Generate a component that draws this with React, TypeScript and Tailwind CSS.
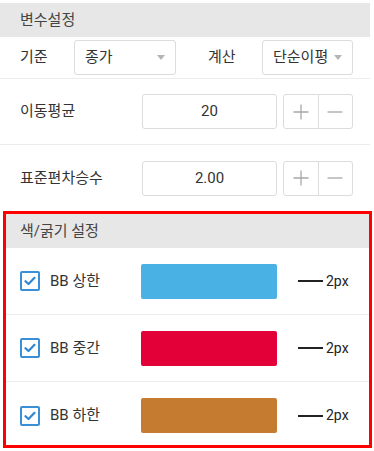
import React from "react";

const font = { fontFamily: "Roboto, 'Noto Sans CJK KR', 'Noto Sans', sans-serif" };

function Arrow() {
  return (
    <svg width="8" height="5" viewBox="0 0 8 5" className="shrink-0">
      <path d="M0 0 L8 0 L4 5 Z" fill="#b5b5b5" />
    </svg>
  );
}

function Select({ value, width }: { value: string; width: string }) {
  return (
    <div className={`${width} h-[35px] border border-[#dcdcdc] rounded-[3px] flex items-center justify-between pl-[10px] pr-[10px] text-[15px] text-[#333]`}>
      <span>{value}</span>
      <Arrow />
    </div>
  );
}

function Stepper() {
  return (
    <div className="w-[70px] h-[35px] border border-[#dcdcdc] rounded-[3px] flex">
      <div className="flex-1 flex items-center justify-center border-r border-[#dcdcdc]">
        <svg width="16" height="16" viewBox="0 0 16 16">
          <path d="M8 0.5 V15.5 M0.5 8 H15.5" stroke="#a8a8a8" strokeWidth="1.3" />
        </svg>
      </div>
      <div className="flex-1 flex items-center justify-center">
        <svg width="16" height="16" viewBox="0 0 16 16">
          <path d="M0.5 8 H15.5" stroke="#a8a8a8" strokeWidth="1.3" />
        </svg>
      </div>
    </div>
  );
}

function NumRow({ label, value, divider }: { label: string; value: string; divider?: boolean }) {
  return (
    <div className={`h-[66px] flex items-center pl-[20px] ${divider ? "border-b border-[#ececec]" : ""}`}>
      <div className="w-[122px] text-[15px] text-[#333]">{label}</div>
      <div className="w-[135px] h-[35px] border border-[#dcdcdc] rounded-[3px] flex items-center justify-center text-[15px] text-[#333]">
        {value}
      </div>
      <div className="ml-[6px]">
        <Stepper />
      </div>
    </div>
  );
}

function Check() {
  return (
    <div className="w-[20px] h-[20px] border-2 border-[#3a8fd6] rounded-[2px] flex items-center justify-center">
      <svg width="12" height="10" viewBox="0 0 12 10">
        <path d="M1.5 5.2 L4.5 8 L10.5 1.8" stroke="#2f86d2" strokeWidth="2.2" fill="none" strokeLinecap="round" strokeLinejoin="round" />
      </svg>
    </div>
  );
}

function ColorRow({ label, color, divider }: { label: string; color: string; divider?: boolean }) {
  return (
    <div className={`h-[67px] flex items-center pl-[14px] ${divider ? "border-b border-[#ececec]" : ""}`}>
      <Check />
      <div className="ml-[10px] w-[91px] text-[15px] text-[#333]">{label}</div>
      <div className="w-[136px] h-[35px] rounded-[2px]" style={{ backgroundColor: color }} />
      <div className="ml-[21px] w-[25px] h-[2px] bg-[#222]" />
      <div className="ml-[3px] text-[14px] text-[#222]">2px</div>
    </div>
  );
}

export default function App() {
  return (
    <div className="w-[374px] h-[451px] bg-white overflow-hidden" style={font}>
      <div className="w-[370px] pt-[3px]">
        <div className="h-[34px] bg-[#e7e7e7] flex items-center pl-[20px] text-[15px] text-[#444]">변수설정</div>
        <div className="h-[42px] flex items-center pl-[20px] border-b border-[#ececec]">
          <div className="w-[54px] text-[15px] text-[#333]">기준</div>
          <Select value="종가" width="w-[102px]" />
          <div className="ml-[32px] w-[54px] text-[15px] text-[#333]">계산</div>
          <Select value="단순이평" width="w-[91px]" />
        </div>
        <NumRow label="이동평균" value="20" divider />
        <NumRow label="표준편차승수" value="2.00" />
      </div>
      <div className="ml-[3px] w-[369px] h-[237px] border-[3px] border-[#ff0000]">
        <div className="h-[34px] bg-[#e7e7e7] flex items-center pl-[14px] text-[15px] text-[#444]">색/굵기 설정</div>
        <ColorRow label="BB 상한" color="#4ab1e4" divider />
        <ColorRow label="BB 중간" color="#e30039" divider />
        <ColorRow label="BB 하한" color="#c57c30" />
      </div>
    </div>
  );
}
